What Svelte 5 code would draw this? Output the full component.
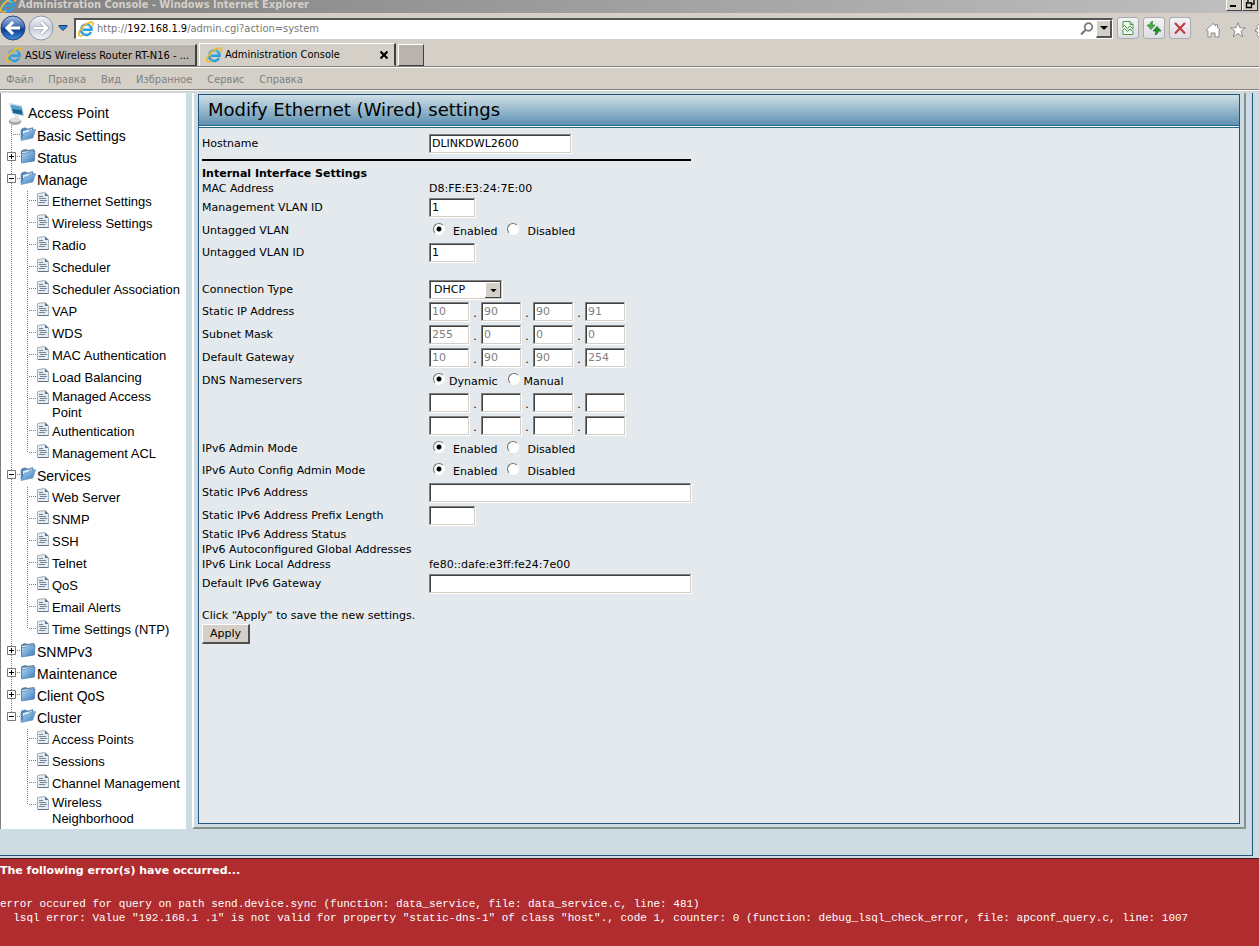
<script lang="ts">
    const menu = ["Файл", "Правка", "Вид", "Избранное", "Сервис", "Справка"]

    const tree = [
        { name: "Basic Settings", state: "none", items: [] },
        { name: "Status", state: "closed", items: [] },
        {
            name: "Manage",
            state: "open",
            items: [
                "Ethernet Settings", "Wireless Settings", "Radio", "Scheduler", "Scheduler Association",
                "VAP", "WDS", "MAC Authentication", "Load Balancing", "Managed Access Point",
                "Authentication", "Management ACL"
            ]
        },
        {
            name: "Services",
            state: "open",
            items: ["Web Server", "SNMP", "SSH", "Telnet", "QoS", "Email Alerts", "Time Settings (NTP)"]
        },
        { name: "SNMPv3", state: "closed", items: [] },
        { name: "Maintenance", state: "closed", items: [] },
        { name: "Client QoS", state: "closed", items: [] },
        {
            name: "Cluster",
            state: "open",
            items: ["Access Points", "Sessions", "Channel Management", "Wireless Neighborhood"]
        }
    ]

    let hostname = $state("DLINKDWL2600")
    let managementVlan = $state("1")
    let untagged = $state("on")
    let untaggedVlan = $state("1")
    let connection = $state("DHCP")
    let address = $state([
        { label: "Static IP Address", parts: ["10", "90", "90", "91"], tall: false },
        { label: "Subnet Mask", parts: ["255", "0", "0", "0"], tall: true },
        { label: "Default Gateway", parts: ["10", "90", "90", "254"], tall: true }
    ])
    let dnsMode = $state("dynamic")
    let dns = $state([["", "", "", ""], ["", "", "", ""]])
    let ipv6 = $state("on")
    let ipv6Auto = $state("on")
    let ipv6Address = $state("")
    let ipv6Prefix = $state("")
    let ipv6Gateway = $state("")

    let fixed = $derived(connection == "DHCP")
</script>

{#snippet ieLogo()}
    <svg class="ie" viewBox="0 0 16 16" aria-hidden="true">
        <path d="M13 11A5.200 5.200 0 1 1 13.500 8.700H5" fill="none" stroke="#2f9fe2" stroke-width="2.600" />
        <path d="M4 6.600A4.600 4.600 0 0 1 12 6" fill="none" stroke="#8fd6f8" stroke-width="1" />
        <path d="M1.700 14.900C-.8 13 2.400 7.200 6.600 4.200 10.500 1.200 14.500 .2 15 2.200c.2.8-.1 1.800-.6 2.700" fill="none" stroke="#efb92c" stroke-width="1.700" />
        <path d="M1.700 14.900c1.200.6 3-.3 4.300-1.200" fill="none" stroke="#efb92c" stroke-width="1.300" />
    </svg>
{/snippet}

{#snippet folder(open: boolean)}
    <svg class="folder" viewBox="0 0 16 16" aria-hidden="true">
        {#if open}
            <path d="M1 13.500V4l1-1.500 4-.7 1 1.200 6-1.300v4" fill="#4e83b3" stroke="#6d93b5" stroke-width=".7" />
            <path d="M3 5l9-2v6H3z" fill="#e8f1f8" />
            <path d="M1 14.500L4.300 7l4-.8 1.200-1.500 6.200-1.200L12.800 12z" fill="url(#folderBlue)" stroke="#5c8fbe" stroke-width=".6" />
        {:else}
            <path d="M1 14V3.500l1-1.500 4-1 1.300 1 7-1V12l-2 1z" fill="#5b7f9f" />
            <path d="M2 4l11-1.500v2L2 6z" fill="#e3eef6" />
            <path d="M1.500 15V5.600l5-.6 1-1 7.500-1-.7 10z" fill="url(#folderBlue)" stroke="#3d74a8" stroke-width=".6" />
        {/if}
    </svg>
{/snippet}

{#snippet page()}
    <svg class="page" viewBox="0 0 12 14" aria-hidden="true">
        <path d="M.5 1.500L8 .5l3.500 3.500v9.500H.5z" fill="#e6ebf0" stroke="#a3afba" />
        <path d="M8 .5v3.500h3.500z" fill="#59728c" />
        <path d="M2 4.500h4M2 6.500h7M3 8.500h7M2 10.500h6" stroke="#71869b" />
        <path d="M1 13.500h10.500" stroke="#657483" />
    </svg>
{/snippet}

{#snippet octets(parts: string[], label: string, disabled: boolean)}
    <div class="octets">
        {#each parts as _, i}
            {#if i > 0}<span class="dot">.</span>{/if}
            <input class="box octet" type="text" aria-label="{label} {i + 1}" bind:value={parts[i]} {disabled}>
        {/each}
    </div>
{/snippet}

<svg class="defs" aria-hidden="true">
    <defs>
        <linearGradient id="folderBlue" x1="0" y1="0" x2="1" y2="1">
            <stop offset="0" stop-color="#b4d6f1" />
            <stop offset=".5" stop-color="#74a9d8" />
            <stop offset="1" stop-color="#3b78b3" />
        </linearGradient>
        <linearGradient id="navBlue" x1="0" y1="0" x2="0" y2="1">
            <stop offset="0" stop-color="#a9bfdf" />
            <stop offset=".45" stop-color="#3d69ae" />
            <stop offset=".55" stop-color="#103d8c" />
            <stop offset="1" stop-color="#3f8fe0" />
        </linearGradient>
        <linearGradient id="navGrey" x1="0" y1="0" x2="0" y2="1">
            <stop offset="0" stop-color="#f4f6f9" />
            <stop offset=".5" stop-color="#c5cddb" />
            <stop offset="1" stop-color="#f2f5fa" />
        </linearGradient>
    </defs>
</svg>

<div class="window">
    <header class="chrome">
        <div class="titlebar">
            {@render ieLogo()}
            <span class="caption">Administration Console - Windows Internet Explorer</span>
            <button class="sys" aria-label="Minimize">
                <svg viewBox="0 0 14 10"><path d="M3 7h6" stroke="#000" stroke-width="2" /></svg>
            </button>
            <button class="sys" aria-label="Restore">
                <svg viewBox="0 0 14 10"><path d="M5 3V0h6v5H9M3 4h6M3.500 3v5.500h5V3" fill="none" stroke="#000" stroke-width="1.300" /></svg>
            </button>
        </div>

        <div class="toolbar">
            <div class="nav">
                <button class="round" aria-label="Back">
                    <svg viewBox="0 0 26 26">
                        <circle cx="13" cy="13" r="12" fill="url(#navBlue)" stroke="#27437a" />
                        <path d="M20 13H8M13 7l-6 6 6 6" fill="none" stroke="#fff" stroke-width="3" />
                    </svg>
                </button>
                <button class="round" aria-label="Forward">
                    <svg viewBox="0 0 26 26">
                        <circle cx="13" cy="13" r="12" fill="url(#navGrey)" stroke="#8f98a8" />
                        <path d="M6 13h12M13 7l6 6-6 6" fill="none" stroke="#9ba5b5" stroke-width="4" />
                        <path d="M6 13h12M13 7l6 6-6 6" fill="none" stroke="#fff" stroke-width="2.500" />
                    </svg>
                </button>
                <button class="recent" aria-label="Recent pages">
                    <svg viewBox="0 0 10 8"><path d="M1 1.500h8v1L5 6.500l-4-4z" fill="#2a86c8" stroke="#123c72" /></svg>
                </button>
            </div>

            <div class="address">
                {@render ieLogo()}
                <span class="url">http://<b>192.168.1.9</b>/admin.cgi?action=system</span>
                <svg class="search" viewBox="0 0 14 14">
                    <circle cx="8.500" cy="5" r="3.800" fill="none" stroke="#777" stroke-width="1.700" />
                    <path d="M5.500 8L1 12.500" stroke="#777" stroke-width="2.200" />
                </svg>
                <button class="drop" aria-label="Show address list">
                    <svg viewBox="0 0 8 4"><path d="M0 0h8L4 4z" /></svg>
                </button>
            </div>

            <button class="tool" aria-label="Compatibility view">
                <svg viewBox="0 0 16 16">
                    <path d="M3 6.500V1.500h7l3 3v4M10 1.500v3h3M3 11v3.500h10V12" fill="#f5faf3" stroke="#4a9a4a" />
                    <path d="M2 7.500l2.500-2 3 3 2.500-2.500 3.500 3.500M2 11l2.500-2.500 3 3L10 9l3.500 3" fill="none" stroke="#3f9f42" />
                </svg>
            </button>
            <button class="tool" aria-label="Refresh">
                <svg viewBox="0 0 16 16">
                    <path d="M7 1.500C4.500 1.500 4 3 4 5H1l4 4.500L9 5H6.200c0-1.500 0-2.700.8-3.500z" fill="#4cb348" stroke="#25812a" stroke-width=".7" />
                    <path d="M9 14.500c2.500 0 3-1.500 3-3.500h3l-4-4.500L7 11h2.800c0 1.500 0 2.700-.8 3.500z" fill="#259129" stroke="#17651c" stroke-width=".7" />
                </svg>
            </button>
            <button class="tool" aria-label="Stop">
                <svg viewBox="0 0 16 16"><path d="M3 3l10 10.500M13 3L3 13.500" stroke="#c03c40" stroke-width="2.200" /></svg>
            </button>

            <div class="commands">
                <button class="glyph" aria-label="Home">
                    <svg viewBox="0 0 16 16"><path d="M1 8l7-6.500 2.500 2.300V2.500h2v3.200L15 8l-1 1v6h-4v-4H6v4H3V9H2z" fill="#fff" stroke="#8b8b8b" /></svg>
                </button>
                <button class="glyph" aria-label="Favorites">
                    <svg viewBox="0 0 16 16"><path d="M8 .8l2 5h5.300L11 9.200l1.700 5.600L8 11.600l-4.700 3.200L5 9.200.7 5.800H6z" fill="#fff" stroke="#8b8b8b" /></svg>
                </button>
                <button class="glyph" aria-label="Tools">
                    <svg viewBox="0 0 16 16"><path d="M6.500 1h3v2l2 1 1.500-1.500 2 2L13.500 6l.5 1.500h1.500v2H14l-1 2 1.500 1.500-2 2-2-1.500-1 .5v1.500h-3V13.500l-1.500-.5L3.500 14.500l-2-2L3 11l-1-1.500H.5v-2H2L3 6 1.500 4.500l2-2L5 4l1.500-1z" fill="#fff" stroke="#8b8b8b" /></svg>
                </button>
            </div>
        </div>

        <div class="tabs">
            <button class="tab">
                {@render ieLogo()}
                <span>ASUS Wireless Router RT-N16 - ...</span>
            </button>
            <button class="tab active">
                {@render ieLogo()}
                <span>Administration Console</span>
                <svg class="close" viewBox="0 0 10 10"><path d="M1.500 1.500l7 7M8.500 1.500l-7 7" stroke="#000" stroke-width="2.200" /></svg>
            </button>
            <button class="new-tab" aria-label="New tab"></button>
        </div>

        <nav class="menu">
            {#each menu as item}
                <button>{item}</button>
            {/each}
        </nav>
    </header>

    <div class="body">
        <div class="columns">
            <nav class="tree">
                <div class="root">
                    <svg viewBox="0 0 18 24" aria-hidden="true">
                        <path d="M1 1l13 2.500 2.500 11L4 12z" fill="#c3d9e8" />
                        <path d="M3 3l10 2 2 8L5 11z" fill="#1d6291" />
                        <path d="M3 3l10 2 .7 3L4 7z" fill="#58a3cc" />
                        <path d="M6 12.500l5 1-1 3.500H7z" fill="#dfe3e6" />
                        <ellipse cx="7" cy="19.500" rx="6.300" ry="3.500" fill="#a5a8ab" />
                        <ellipse cx="7" cy="18" rx="5.500" ry="2.200" fill="#dcdedf" />
                    </svg>
                    <a href="#access-point">Access Point</a>
                </div>
                <ul class="branches">
                    {#each tree as branch}
                        <li class="branch">
                            <div class="row">
                                {#if branch.state == "none"}
                                    <span class="toggle-space"></span>
                                {:else}
                                    <button class="toggle" aria-label="Toggle {branch.name}">
                                        <svg viewBox="0 0 9 9">
                                            <path d="M.5.5h8v8h-8z" fill="#fff" stroke="#777" />
                                            <path d={branch.state == "closed" ? "M2 4.5h5M4.5 2v5" : "M2 4.5h5"} stroke="#000" />
                                        </svg>
                                    </button>
                                {/if}
                                {@render folder(branch.state != "closed")}
                                <a href="#{branch.name}">{branch.name}</a>
                            </div>
                            {#if branch.items.length > 0}
                                <ul class="leaves">
                                    {#each branch.items as item}
                                        <li class="leaf">
                                            {@render page()}
                                            <a href="#{item}">{item}</a>
                                        </li>
                                    {/each}
                                </ul>
                            {/if}
                        </li>
                    {/each}
                </ul>
            </nav>

            <div class="frame">
                <main class="panel">
                    <h1>Modify Ethernet (Wired) settings</h1>
                    <form onsubmit={(e) => e.preventDefault()}>
                        <div class="field">
                            <label for="hostname">Hostname</label>
                            <input class="box host" id="hostname" type="text" bind:value={hostname}>
                        </div>
                        <hr>
                        <h2>Internal Interface Settings</h2>
                        <div class="field text">
                            <span>MAC Address</span>
                            <span>D8:FE:E3:24:7E:00</span>
                        </div>
                        <div class="field tall">
                            <label for="mgmt-vlan">Management VLAN ID</label>
                            <input class="box short" id="mgmt-vlan" type="text" bind:value={managementVlan}>
                        </div>
                        <div class="field tall">
                            <span>Untagged VLAN</span>
                            <div class="radios">
                                <label><input type="radio" name="untagged" value="on" bind:group={untagged}>Enabled</label>
                                <label><input type="radio" name="untagged" value="off" bind:group={untagged}>Disabled</label>
                            </div>
                        </div>
                        <div class="field">
                            <label for="untagged-vlan">Untagged VLAN ID</label>
                            <input class="box short" id="untagged-vlan" type="text" bind:value={untaggedVlan}>
                        </div>

                        <div class="field spaced">
                            <label for="connection">Connection Type</label>
                            <div class="select">
                                <select id="connection" bind:value={connection}>
                                    <option>DHCP</option>
                                    <option>Static IP</option>
                                </select>
                                <svg viewBox="0 0 15 15" aria-hidden="true">
                                    <path d="M0 0h15v15H0z" fill="#404040" />
                                    <path d="M0 0h14v14H0z" fill="#fff" />
                                    <path d="M1 1h13v13H1z" fill="#d4d0c8" />
                                    <path d="M5 6.500h6l-3 3z" />
                                </svg>
                            </div>
                        </div>
                        {#each address as line}
                            <div class="field" class:tall={line.tall}>
                                <span>{line.label}</span>
                                {@render octets(line.parts, line.label, fixed)}
                            </div>
                        {/each}
                        <div class="field tall">
                            <span>DNS Nameservers</span>
                            <div class="radios tight">
                                <label><input type="radio" name="dns" value="dynamic" bind:group={dnsMode}>Dynamic</label>
                                <label><input type="radio" name="dns" value="manual" bind:group={dnsMode}>Manual</label>
                            </div>
                        </div>
                        {#each dns as server, i}
                            <div class="field" class:tall={i == 1}>
                                <span></span>
                                {@render octets(server, "Nameserver", false)}
                            </div>
                        {/each}
                        <div class="field tall">
                            <span>IPv6 Admin Mode</span>
                            <div class="radios">
                                <label><input type="radio" name="ipv6" value="on" bind:group={ipv6}>Enabled</label>
                                <label><input type="radio" name="ipv6" value="off" bind:group={ipv6}>Disabled</label>
                            </div>
                        </div>
                        <div class="field">
                            <span>IPv6 Auto Config Admin Mode</span>
                            <div class="radios">
                                <label><input type="radio" name="ipv6auto" value="on" bind:group={ipv6Auto}>Enabled</label>
                                <label><input type="radio" name="ipv6auto" value="off" bind:group={ipv6Auto}>Disabled</label>
                            </div>
                        </div>
                        <div class="field">
                            <label for="ipv6-address">Static IPv6 Address</label>
                            <input class="box long" id="ipv6-address" type="text" bind:value={ipv6Address}>
                        </div>
                        <div class="field tall">
                            <label for="ipv6-prefix">Static IPv6 Address Prefix Length</label>
                            <input class="box short" id="ipv6-prefix" type="text" bind:value={ipv6Prefix}>
                        </div>
                        <div class="field text"><span>Static IPv6 Address Status</span></div>
                        <div class="field text"><span>IPv6 Autoconfigured Global Addresses</span></div>
                        <div class="field text">
                            <span>IPv6 Link Local Address</span>
                            <span>fe80::dafe:e3ff:fe24:7e00</span>
                        </div>
                        <div class="field tall">
                            <label for="ipv6-gateway">Default IPv6 Gateway</label>
                            <input class="box long" id="ipv6-gateway" type="text" bind:value={ipv6Gateway}>
                        </div>

                        <p>Click “Apply“ to save the new settings.</p>
                        <button class="apply">Apply</button>
                    </form>
                </main>
            </div>
        </div>
    </div>

    <section class="errors">
        <h2>The following error(s) have occurred...</h2>
        <pre>error occured for query on path send.device.sync (function: data_service, file: data_service.c, line: 481)
  lsql error: Value "192.168.1 .1" is not valid for property "static-dns-1" of class "host"., code 1, counter: 0 (function: debug_lsql_check_error, file: apconf_query.c, line: 1007</pre>
    </section>
</div>

<style>
    :global(body) {
        background-color: #d4d0c8;
    }
    .defs {
        position: absolute;
        width: 0;
        height: 0;
    }
    .window {
        display: flex;
        flex-direction: column;
        min-height: 100vh;
        overflow: hidden;
        font-family: "DejaVu Sans", Verdana, sans-serif;
        font-size: 11px;
        color: #000;
    }
    button {
        font: inherit;
        color: inherit;
        margin: 0;
        padding: 0;
        border: none;
        background: none;
    }
    svg {
        display: block;
        flex: none;
    }
    a {
        color: inherit;
        text-decoration: none;
    }
    ul {
        list-style: none;
        margin: 0;
        padding: 0;
    }

    /* browser chrome */
    .chrome {
        font-family: "DejaVu Sans Condensed", Tahoma, sans-serif;
        background-color: #d4d0c8;
    }
    .ie {
        width: 16px;
        height: 16px;
    }
    .titlebar {
        display: flex;
        align-items: flex-end;
        height: 13px;
        padding-right: 1px;
        overflow: hidden;
        background: linear-gradient(90deg, #808080, #c0c0c0);
        color: #d4d0c8;
        font-weight: bold;
    }
    .caption {
        flex: 1;
        align-self: flex-start;
        padding-left: 2px;
        line-height: 10px;
        white-space: nowrap;
    }
    .sys {
        width: 16px;
        height: 14px;
        margin-bottom: 2px;
        background-color: #d4d0c8;
        border: 1px solid #fff;
        border-right-color: #404040;
        border-bottom-color: #404040;
    }
    .sys svg {
        width: 14px;
        height: 10px;
    }
    .toolbar {
        display: flex;
        align-items: center;
        gap: 4px;
        height: 30px;
    }
    .nav {
        display: flex;
        align-items: center;
        width: 70px;
    }
    .round svg {
        width: 26px;
        height: 26px;
    }
    .nav .round + .round {
        margin-left: 2px;
    }
    .recent svg {
        width: 10px;
        height: 8px;
        margin-left: 4px;
    }
    .address {
        display: flex;
        align-items: center;
        flex: 1;
        height: 18px;
        background-color: #fff;
        border: 1px solid #fff;
        border-top: 2px solid #555;
        border-left: 2px solid #555;
        padding-left: 2px;
        color: #777;
    }
    .url {
        flex: 1;
        padding-left: 3px;
        white-space: nowrap;
    }
    .url b {
        color: #000;
        font-weight: normal;
    }
    .search {
        width: 14px;
        height: 14px;
        margin-right: 2px;
    }
    .drop {
        display: flex;
        align-items: center;
        justify-content: center;
        width: 16px;
        height: 18px;
        background-color: #d4d0c8;
        border: 1px solid #fff;
        border-right: 2px solid #555;
        border-bottom: 2px solid #555;
        box-sizing: border-box;
    }
    .drop svg {
        width: 8px;
        height: 4px;
    }
    .tool {
        display: flex;
        align-items: center;
        justify-content: center;
        width: 22px;
        height: 22px;
        box-sizing: border-box;
        border: 1px solid #aaabb2;
        border-radius: 3px;
        background: linear-gradient(#f3f3f5, #dddde2);
    }
    .tool svg, .glyph svg {
        width: 16px;
        height: 16px;
    }
    .commands {
        display: flex;
        gap: 9px;
        width: 54px;
        padding: 4px 0 0 10px;
        overflow: hidden;
    }
    .tabs {
        display: flex;
        align-items: flex-end;
        gap: 2px;
        height: 23px;
    }
    .tab {
        display: flex;
        align-items: center;
        gap: 3px;
        width: 197px;
        height: 22px;
        padding: 0 5px 0 6px;
        box-sizing: border-box;
        white-space: nowrap;
        background-color: #b8b4ad;
        border-top: 1px solid #dedbd5;
        border-right: 2px solid #404040;
        border-bottom: 1px solid #404040;
    }
    .tab.active {
        height: 23px;
        background-color: #d4d0c8;
        border-top-color: #fff;
        border-bottom-color: #d4d0c8;
        border-left: 1px solid #fff;
    }
    .close {
        width: 10px;
        height: 10px;
        margin-left: auto;
    }
    .new-tab {
        width: 26px;
        height: 22px;
        background-color: #b8b4ad;
        border: 1px solid #fff;
        border-right-color: #404040;
        border-bottom-color: #404040;
    }
    .menu {
        display: flex;
        gap: 15px;
        height: 20px;
        padding: 2px 6px 0;
        color: #808080;
        border-top: 1px solid #808080;
        border-bottom: 1px solid #808080;
        box-shadow: inset 0 1px #fff, 0 1px #fff;
    }

    /* router page */
    .body {
        margin-top: 2px;
        padding: 1px 6px 0 0;
        background-color: #cddbe3;
        border-bottom: 2px solid #cddbe3;
    }
    .columns {
        display: flex;
        padding-bottom: 26px;
        border-right: 1px solid #23527c;
        border-bottom: 1px solid #23527c;
    }
    .tree {
        flex: none;
        width: 185px;
        padding-top: 9px;
        background-color: #fff;
        border-left: 1px solid #808080;
        font-family: "Liberation Sans", Arial, sans-serif;
        font-size: 14px;
    }
    .root {
        display: flex;
        gap: 2px;
        height: 23px;
        padding-left: 7px;
        line-height: 22px;
    }
    .root svg {
        width: 18px;
        height: 24px;
    }
    .branches {
        padding-bottom: 2px;
    }
    .branch {
        position: relative;
    }
    .branch::before, .leaf::before {
        content: "";
        position: absolute;
        top: 0;
        left: 10px;
        width: 1px;
        height: 100%;
        background: repeating-linear-gradient(#808080 0 1px, transparent 1px 2px);
    }
    .branch:last-child::before {
        height: 10px;
    }
    .row::before, .leaf::after {
        content: "";
        position: absolute;
        top: 9px;
        left: 11px;
        width: 9px;
        height: 1px;
        background: repeating-linear-gradient(90deg, transparent 0 1px, #808080 1px 2px);
    }
    .row {
        display: flex;
        height: 22px;
        padding-left: 6px;
        line-height: 22px;
    }
    .toggle, .toggle-space {
        position: relative;
        width: 9px;
        height: 9px;
        margin: 5px 4px 0 0;
    }
    .toggle svg {
        width: 9px;
        height: 9px;
    }
    .folder {
        width: 16px;
        height: 16px;
        margin: 1px 1px 0 0;
    }
    .leaf {
        position: relative;
        display: flex;
        gap: 3px;
        min-height: 22px;
        padding: 0 4px 0 36px;
        font-size: 13px;
        line-height: 16px;
    }
    .leaf::before {
        left: 26px;
    }
    .leaf:last-child::before {
        height: 10px;
    }
    .leaf::after {
        left: 27px;
    }
    .leaf a {
        align-self: center;
    }
    .page {
        width: 12px;
        height: 14px;
        margin-top: 1px;
    }
    .frame {
        flex: 1;
        margin: 0 6px 0 6px;
        padding: 1px 4px 3px 4px;
        border-left: 2px solid #fff;
        border-right: 2px solid #87938f;
        border-bottom: 2px solid #87938f;
    }
    .panel {
        height: 100%;
        box-sizing: border-box;
        background-color: #e3e9ec;
        border: 1px solid #23527c;
    }
    h1 {
        margin: 0;
        padding-left: 9px;
        font-size: 18px;
        font-weight: normal;
        line-height: 30px;
        background: linear-gradient(#d0dfe5, #5d91b3);
        border-bottom: 1px solid #23678f;
        box-shadow: 0 1px #fff, 0 2px #23678f;
    }
    form {
        padding: 7px 3px;
    }
    .field {
        display: grid;
        grid-template-columns: 227px 1fr;
        align-items: center;
        height: 22px;
        box-sizing: border-box;
        padding-bottom: 1px;
        white-space: nowrap;
    }
    .field.tall {
        height: 23px;
        padding-bottom: 0;
    }
    .field.text {
        height: 15px;
        padding-bottom: 0;
    }
    .field.spaced {
        margin-top: 15px;
    }
    hr {
        width: 489px;
        height: 2px;
        margin: 4px 0 5px;
        border: none;
        background-color: #000;
    }
    h2 {
        margin: 0;
        font-size: 11px;
        line-height: 15px;
    }
    .box, select {
        height: 19px;
        box-sizing: border-box;
        margin: 0;
        padding: 0 2px;
        border: 1px solid #d4d0c8;
        border-top-color: #808080;
        border-left-color: #808080;
        border-radius: 0;
        background-color: #fff;
        box-shadow: inset 1px 1px #404040, 1px 1px #fff;
        font: inherit;
        color: #000;
    }
    .box:disabled {
        color: #808080;
    }
    .host {
        width: 142px;
    }
    .short {
        width: 46px;
    }
    .long {
        width: 262px;
    }
    .octets {
        display: flex;
        align-items: center;
    }
    .octet {
        width: 40px;
    }
    .dot {
        width: 12px;
        padding-top: 4px;
        text-align: center;
    }
    .radios {
        display: flex;
        gap: 10px;
        padding-left: 4px;
    }
    .radios label {
        display: flex;
        align-items: flex-end;
        gap: 8px;
        height: 15px;
        line-height: 13px;
    }
    .radios.tight label {
        gap: 4px;
    }
    .radios input {
        appearance: none;
        width: 12px;
        height: 12px;
        margin: 0 0 3px;
        border: 1px solid #fff;
        border-top-color: #707070;
        border-left-color: #707070;
        border-radius: 50%;
        background-color: #fff;
    }
    .radios input:checked {
        background: radial-gradient(circle, #000 2px, #fff 3px);
    }
    .select {
        position: relative;
        width: 73px;
        height: 19px;
    }
    .select select {
        display: block;
        width: 100%;
        appearance: none;
        padding-left: 4px;
    }
    .select svg {
        position: absolute;
        top: 2px;
        right: 1px;
        width: 16px;
        height: 16px;
        pointer-events: none;
    }
    p {
        margin: 13px 0 0;
        line-height: 15px;
    }
    .apply {
        display: block;
        width: 48px;
        height: 20px;
        margin-top: 1px;
        background-color: #d4d0c8;
        border: 1px solid #fff;
        border-right: 2px solid #505050;
        border-bottom: 2px solid #505050;
    }

    /* error output */
    .errors {
        flex: 1;
        padding-top: 4px;
        background-color: #b02c2e;
        border-top: 1px solid #3c1a28;
        color: #fff;
    }
    pre {
        margin: 19px 0 0;
        font-family: "Liberation Mono", "Courier New", monospace;
        font-size: 11px;
        line-height: 14px;
    }
</style>
